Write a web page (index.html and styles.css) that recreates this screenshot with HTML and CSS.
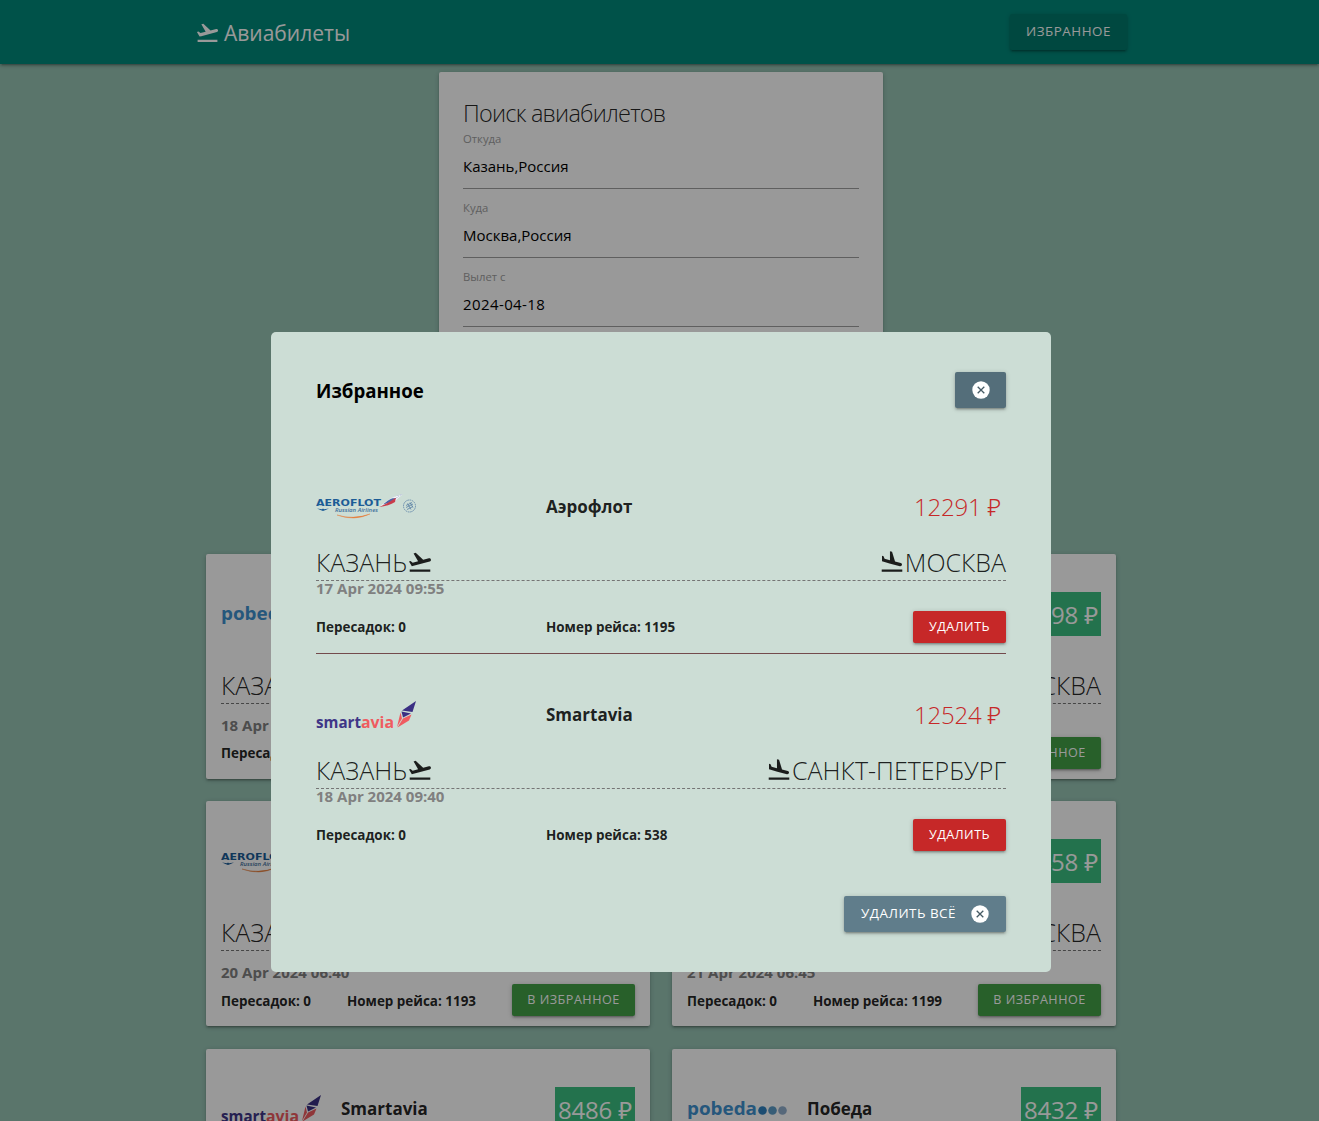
FILE: index.html
```html
<!DOCTYPE html>
<html lang="ru">
<head>
<meta charset="utf-8">
<title>Авиабилеты</title>
<link rel="stylesheet" href="styles.css">
</head>
<body>
<svg class="defs" aria-hidden="true">
  <symbol id="takeoff" viewBox="0 0 24 24"><path d="M2.5 19h19v2h-19zm19.57-9.36c-.21-.8-1.04-1.28-1.84-1.06L14.92 10l-6.9-6.43-1.93.51 4.14 7.17-4.97 1.33-1.97-1.54-1.45.39 1.82 3.16.77 1.33 1.6-.43 5.31-1.42 4.35-1.16L21 11.49c.81-.23 1.28-1.05 1.07-1.85z"/></symbol>
  <symbol id="landing" viewBox="0 0 24 24"><path d="M2.5 19h19v2h-19zm7.18-5.73l4.35 1.16 5.31 1.42c.8.21 1.62-.26 1.84-1.06.21-.8-.26-1.62-1.06-1.84l-5.31-1.42-2.76-9.02L10.12 2v8.28L5.15 8.95l-.93-2.32-1.45-.39v5.17l1.6.43 5.31 1.43z"/></symbol>
  <symbol id="cancel" viewBox="0 0 18 18"><circle cx="9" cy="9" r="8.7" fill="#fff"/><path d="M5.700 5.700l6.600 6.600M12.300 5.700l-6.600 6.600" fill="none" stroke="currentColor" stroke-width="1.3"/></symbol>
  <symbol id="aeroflot" viewBox="0 0 100 28">
    <path d="M1 15.400l5 .8 1-.7 1 .7 5-.8-4 1.900-2 .8-2-.8z" fill="#1c5c96"/>
    <path d="M21 22Q37 27 54 21Q38 28.500 21 22z" fill="#e67a35" stroke="#e67a35" stroke-width=".4"/>
    <path d="M63 14Q74 4 87 1L78 9Q72 10 63 14z" fill="#eef2f5"/>
    <path d="M67 11.500Q75 4 87 1Q79 5 76 9z" fill="#4c62a4"/>
    <path d="M63 14Q71 11 80 4.500L79 9Q73 13 63 14z" fill="#c93c4b"/>
    <path d="M74 5.500Q80 2.500 87 1L80 5z" fill="#f3f5f7"/>
    <circle cx="93.500" cy="13" r="6" fill="none" stroke="#6c8fae" stroke-width="1" stroke-dasharray="1.600 .7"/>
    <path d="M90 12.500l6-3M90 14.500l7-3.500M91 16.500l6-3M91.500 10.500l3.500 6M94 9.500l3 5" stroke="#587fa3" stroke-width=".8"/>
  </symbol>
  <symbol id="smartavia" viewBox="0 0 100 28">
    <path d="M100 0L86 9.500L96.500 11zM85.500 10.500L87 16.500L95 12.500z" fill="#3a2f83"/>
    <path d="M84.500 11.500L81 26L86 17.500zM95.500 13.500L87 17.500L81.500 26.500L93 19.500z" fill="#ef5b60"/>
  </symbol>
  <symbol id="pobeda" viewBox="0 0 100 28">
    <circle cx="75.500" cy="15.500" r="4.300" fill="#2f81bf"/><circle cx="85.500" cy="15.500" r="4.300" fill="#5b9bc7"/><circle cx="95.500" cy="15.500" r="4.300" fill="#8fadcc"/>
  </symbol>
</svg>

<nav class="navbar">
  <div class="page navbar-inner">
    <a class="brand"><svg class="icon"><use href="#takeoff"/></svg><span class="brand-text">Авиабилеты</span></a>
    <a class="btn btn-fav-list">Избранное</a>
  </div>
</nav>

<main class="page">
  <form class="search">
    <h1 class="search-title">Поиск авиабилетов</h1>
    <div class="field"><label>Откуда</label><div class="value">Казань,Россия</div></div>
    <div class="field"><label>Куда</label><div class="value">Москва,Россия</div></div>
    <div class="field"><label>Вылет с</label><div class="value value-date">2024-04-18</div></div>
  </form>

  <section class="tickets">
    <article class="card">
      <div class="card-head"><svg class="logo" viewBox="0 0 100 28"><text class="lg-pobeda" x="0" y="20" textLength="70" lengthAdjust="spacingAndGlyphs">pobeda</text><use href="#pobeda"/></svg><b class="airline">Победа</b><span class="price">8398 ₽</span></div>
      <div class="cities"><span class="city">Казань</span><span class="city">Москва</span></div>
      <div class="date">18 Apr 2024 06:35</div>
      <div class="info"><b>Пересадок: 0</b><b>Номер рейса: 532</b><a class="btn btn-small green">В избранное</a></div>
    </article>
    <article class="card">
      <div class="card-head"><svg class="logo" viewBox="0 0 100 28"><text class="lg-pobeda" x="0" y="20" textLength="70" lengthAdjust="spacingAndGlyphs">pobeda</text><use href="#pobeda"/></svg><b class="airline">Победа</b><span class="price">8398 ₽</span></div>
      <div class="cities"><span class="city">Казань</span><span class="city">Москва</span></div>
      <div class="date">19 Apr 2024 06:35</div>
      <div class="info"><b>Пересадок: 0</b><b>Номер рейса: 532</b><a class="btn btn-small green">В избранное</a></div>
    </article>
    <article class="card">
      <div class="card-head"><svg class="logo" viewBox="0 0 100 28"><text class="lg-aero" x="0" y="12.500" textLength="65" lengthAdjust="spacingAndGlyphs">AEROFLOT</text><text class="lg-lines" x="19" y="19" textLength="43" lengthAdjust="spacingAndGlyphs">Russian Airlines</text><use href="#aeroflot"/></svg><b class="airline">Аэрофлот</b><span class="price">8458 ₽</span></div>
      <div class="cities"><span class="city">Казань</span><span class="city">Москва</span></div>
      <div class="date">20 Apr 2024 06:40</div>
      <div class="info"><b>Пересадок: 0</b><b>Номер рейса: 1193</b><a class="btn btn-small green">В избранное</a></div>
    </article>
    <article class="card">
      <div class="card-head"><svg class="logo" viewBox="0 0 100 28"><text class="lg-aero" x="0" y="12.500" textLength="65" lengthAdjust="spacingAndGlyphs">AEROFLOT</text><text class="lg-lines" x="19" y="19" textLength="43" lengthAdjust="spacingAndGlyphs">Russian Airlines</text><use href="#aeroflot"/></svg><b class="airline">Аэрофлот</b><span class="price">8458 ₽</span></div>
      <div class="cities"><span class="city">Казань</span><span class="city">Москва</span></div>
      <div class="date">21 Apr 2024 06:45</div>
      <div class="info"><b>Пересадок: 0</b><b>Номер рейса: 1199</b><a class="btn btn-small green">В избранное</a></div>
    </article>
    <article class="card">
      <div class="card-head"><svg class="logo" viewBox="0 0 100 28"><text class="lg-smart" x="0" y="26.500" textLength="45" lengthAdjust="spacingAndGlyphs">smart</text><text class="lg-avia" x="45" y="26.500" textLength="33" lengthAdjust="spacingAndGlyphs">avia</text><use href="#smartavia"/></svg><b class="airline">Smartavia</b><span class="price">8486 ₽</span></div>
    </article>
    <article class="card">
      <div class="card-head"><svg class="logo" viewBox="0 0 100 28"><text class="lg-pobeda" x="0" y="20" textLength="70" lengthAdjust="spacingAndGlyphs">pobeda</text><use href="#pobeda"/></svg><b class="airline">Победа</b><span class="price">8432 ₽</span></div>
    </article>
  </section>
</main>

<div class="overlay">
  <section class="modal">
    <header class="modal-head"><h2 class="modal-title">Избранное</h2><a class="btn btn-close"><svg class="cancel"><use href="#cancel"/></svg></a></header>
    <article class="fav">
      <div class="fav-head"><svg class="logo" viewBox="0 0 100 28"><text class="lg-aero" x="0" y="12.500" textLength="65" lengthAdjust="spacingAndGlyphs">AEROFLOT</text><text class="lg-lines" x="19" y="19" textLength="43" lengthAdjust="spacingAndGlyphs">Russian Airlines</text><use href="#aeroflot"/></svg><b class="airline">Аэрофлот</b><span class="fav-price">12291 ₽</span></div>
      <div class="cities"><span class="city">Казань<svg class="icon"><use href="#takeoff"/></svg></span><span class="city"><svg class="icon"><use href="#landing"/></svg>Москва</span></div>
      <div class="date">17 Apr 2024 09:55</div>
      <div class="info"><b>Пересадок: 0</b><b>Номер рейса: 1195</b><a class="btn btn-small red">Удалить</a></div>
    </article>
    <article class="fav">
      <div class="fav-head"><svg class="logo" viewBox="0 0 100 28"><text class="lg-smart" x="0" y="26.500" textLength="45" lengthAdjust="spacingAndGlyphs">smart</text><text class="lg-avia" x="45" y="26.500" textLength="33" lengthAdjust="spacingAndGlyphs">avia</text><use href="#smartavia"/></svg><b class="airline">Smartavia</b><span class="fav-price">12524 ₽</span></div>
      <div class="cities"><span class="city">Казань<svg class="icon"><use href="#takeoff"/></svg></span><span class="city"><svg class="icon"><use href="#landing"/></svg>Санкт-Петербург</span></div>
      <div class="date">18 Apr 2024 09:40</div>
      <div class="info"><b>Пересадок: 0</b><b>Номер рейса: 538</b><a class="btn btn-small red">Удалить</a></div>
    </article>
    <footer class="modal-foot"><a class="btn btn-clear">Удалить всё<svg class="cancel"><use href="#cancel"/></svg></a></footer>
  </section>
</div>
</body>
</html>
```
FILE: styles.css
```css
* { box-sizing: border-box; }

body {
  margin: 0;
  height: 1121px;
  overflow: hidden;
  background: #96c3b3;
  color: rgba(0, 0, 0, .87);
  font: 15px/1.5 "Open Sans", "Noto Sans", sans-serif;
}

.defs { position: absolute; width: 0; height: 0; }

.page { width: 932px; margin-left: 195px; }

.icon { width: 26px; height: 26px; fill: currentColor; flex: none; }
.logo { width: 100px; height: 28px; }
.cancel { width: 18px; height: 18px; }

/* airline wordmarks */
.lg-aero { font: 700 8.700px "DejaVu Sans", sans-serif; fill: #1c5c96; }
.lg-lines { font: italic 600 5.500px "Open Sans", sans-serif; fill: #3f719c; }
.lg-smart { font: 700 16.500px "Open Sans", sans-serif; fill: #3f3687; }
.lg-avia { font: 700 16.500px "Open Sans", sans-serif; fill: #ef5b60; }
.lg-pobeda { font: 700 18px "Open Sans", sans-serif; fill: #3f92cf; }

.navbar {
  height: 64px;
  background: #00897b;
  color: #fff;
  box-shadow: 0 2px 2px rgba(0, 0, 0, .14), 0 3px 1px -2px rgba(0, 0, 0, .12), 0 1px 5px rgba(0, 0, 0, .2);
  position: relative;
}
.navbar-inner { display: flex; align-items: center; justify-content: space-between; height: 64px; }
.brand { display: flex; align-items: center; gap: 4px; font-size: 21px; }
.brand .icon { width: 25px; height: 25px; }
.brand-text { padding-top: 3px; }

.btn {
  display: inline-flex;
  align-items: center;
  justify-content: center;
  height: 36px;
  border-radius: 2px;
  color: #fff;
  font-size: 13.400px;
  letter-spacing: .5px;
  text-transform: uppercase;
  white-space: nowrap;
  box-shadow: 0 2px 2px rgba(0, 0, 0, .14), 0 3px 1px -2px rgba(0, 0, 0, .12), 0 1px 5px rgba(0, 0, 0, .2);
}
.btn-fav-list { width: 117px; padding-bottom: 1px; background: #00796b; }
.btn-small { height: 32px; font-size: 12.600px; }
.green { width: 123px; background: #43a047; }
.red { width: 93px; background: #c62828; }

.search {
  width: 444px;
  height: 460px;
  margin: 8px 0 22px 244px;
  padding: 24px;
  background: #fff;
  border-radius: 2px;
  box-shadow: 0 2px 2px rgba(0, 0, 0, .14), 0 1px 5px rgba(0, 0, 0, .2);
}
.search-title { margin: 0; height: 36px; font-size: 23.500px; line-height: 35px; font-weight: 300; letter-spacing: -.8px; }
.field { height: 69px; }
.field label { display: block; height: 16px; font-size: 11.300px; line-height: 14px; color: #9e9e9e; }
.value { height: 41px; border-bottom: 1px solid #9e9e9e; font-size: 15px; line-height: 36px; color: #000; }
.value-date { letter-spacing: .4px; }

.tickets { display: grid; grid-template-columns: 444px 444px; gap: 22.400px 22px; padding-left: 11px; }
.card {
  height: 225px;
  padding: 38px 15px 10px;
  background: #fff;
  border-radius: 2px;
  box-shadow: 0 2px 2px rgba(0, 0, 0, .14), 0 3px 1px -2px rgba(0, 0, 0, .12), 0 1px 5px rgba(0, 0, 0, .2);
}
.card-head { display: grid; grid-template-columns: 120px 1fr auto; align-items: center; height: 44px; }
.airline { font-size: 17px; }
.price { width: 80px; height: 44px; background: #3bbf80; color: #fff; font-size: 24px; line-height: 45px; letter-spacing: -.2px; text-align: center; white-space: nowrap; }
.cities {
  display: flex;
  justify-content: space-between;
  align-items: flex-end;
  height: 68px;
  border-bottom: 1px dashed #757575;
}
.city { display: flex; align-items: center; height: 36px; font-size: 25px; line-height: 36px; font-weight: 350; text-transform: uppercase; }
.date { height: 33px; padding-top: 10px; font-size: 15px; line-height: 22px; font-weight: 700; color: #808080; }
.info { display: flex; justify-content: space-between; align-items: center; height: 32px; font-size: 13.450px; }
.info b { padding-top: 1px; }

.overlay { position: fixed; inset: 0; background: rgba(0, 0, 0, .4); }
.modal {
  width: 780px;
  height: 640px;
  margin: 332px 0 0 271px;
  padding: 40px 45px;
  background: #ccddd5;
  border-radius: 5px;
}
.modal-head { display: flex; justify-content: space-between; align-items: center; height: 36px; margin-bottom: 77px; }
.modal-title { margin: 0; padding-top: 2px; font-size: 18.700px; color: #000; }
.btn-close { width: 51px; background: #546e7a; color: #455a64; }
.fav + .fav { margin-top: 10px; padding-top: 39px; border-top: 1px solid #734a4c; }
.fav-head, .fav .info { display: grid; grid-template-columns: 230px 1fr auto; align-items: center; }
.fav-head { height: 44px; }
.fav-price { padding-right: 5px; color: #c62828; font-size: 24px; font-weight: 350; letter-spacing: -.2px; }
.fav .cities { height: 52px; }
.fav .date { height: 30px; padding-top: 0; line-height: 15px; }
.modal-foot { display: flex; justify-content: flex-end; margin-top: 45px; }
.btn-clear { width: 162px; gap: 15px; padding-bottom: 1px; background: #607d8b; }
.btn-clear .cancel { color: #455a64; }
```
